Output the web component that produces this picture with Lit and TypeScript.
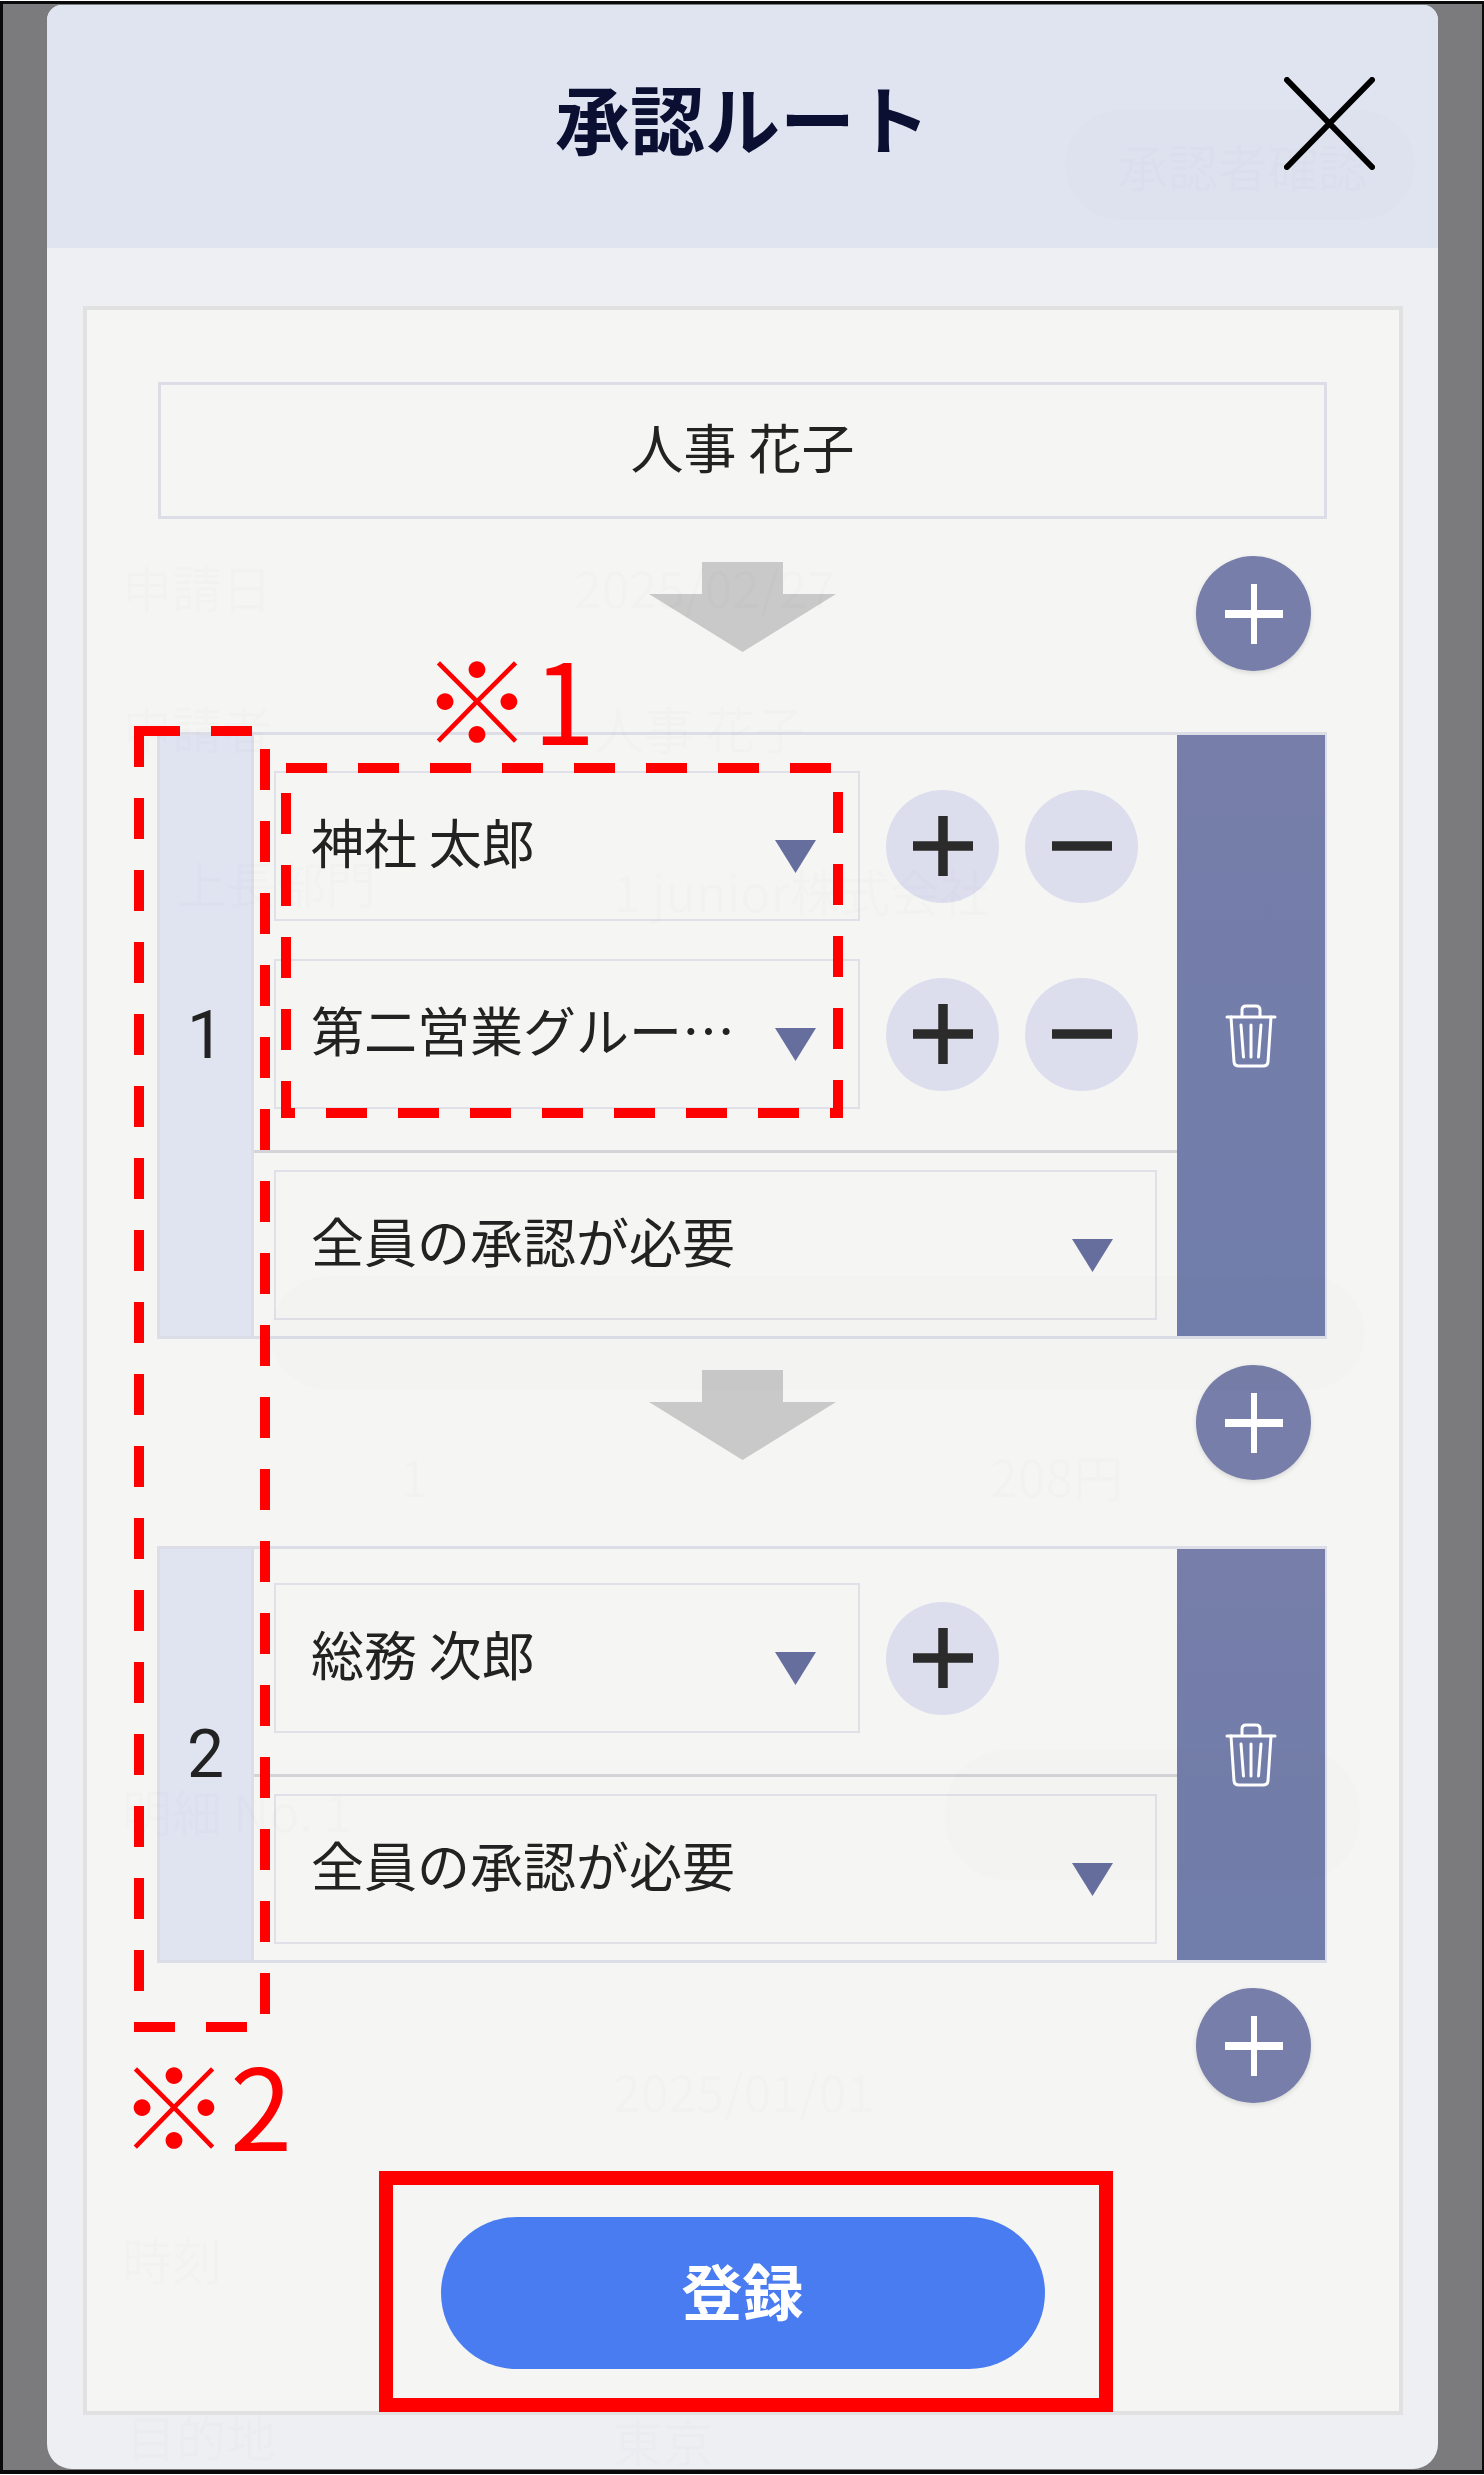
import { LitElement, html, css, svg } from "lit";
import { customElement } from "lit/decorators.js";

const ghosts: [string, number, number, number][] = [
  ["承認者確認", 1118, 135, 50],
  ["神社 太郎", 1160, 300, 46],
  ["申請日", 122, 556, 50],
  ["2025/02/27", 574, 556, 50],
  ["申請者", 122, 697, 50],
  ["人事 花子", 594, 697, 50],
  ["上長部門", 176, 852, 50],
  ["1 junior株式会社", 613, 860, 50],
  ["第二営業部", 580, 1040, 46],
  ["1", 400, 1445, 50],
  ["208円", 990, 1445, 50],
  ["明細 No. 1", 122, 1780, 50],
  ["2025/01/01", 613, 2060, 50],
  ["時刻", 122, 2228, 50],
  ["目的地", 126, 2405, 50],
  ["東京", 613, 2410, 50],
];

const tri = html`<svg class="tri" viewBox="0 0 41 33"><polygon points="0,0 41,0 20.5,33" fill="#666e9e"></polygon></svg>`;

const trash = html`<svg class="trash" viewBox="0 0 52 66" fill="none" stroke="#fff" stroke-width="3" stroke-linecap="round" stroke-linejoin="round">
  <path d="M2 14 H50"></path>
  <path d="M17 13 V7 Q17 3 21 3 H31 Q35 3 35 7 V13"></path>
  <path d="M6 14 L9 59 Q9.5 63 14 63 H38 Q42.5 63 43 59 L46 14"></path>
  <path d="M16 22 L18.5 54 M26 22 V54 M36 22 L33.500 54"></path>
</svg>`;

@customElement("app-root")
export class AppRoot extends LitElement {
  static styles = css`
    :host {
      display: block;
      position: relative;
      width: 1484px;
      height: 2475px;
      background: #fff;
      overflow: hidden;
      font-family: "Noto Sans CJK JP", "Noto Sans", sans-serif;
      color: #222;
    }
    .frame {
      box-sizing: border-box;
      width: 1484px;
      height: 2473px;
      margin-top: 1px;
      padding: 1px 44px 1px 44px;
      border: solid #0a0a0a;
      border-width: 3px 2px 4px 3px;
      background: #7b7b7d;
    }
    .modal {
      height: 100%;
      box-sizing: border-box;
      display: flex;
      flex-direction: column;
      background: #eeeff3;
      border-radius: 15px 15px 25px 25px;
      overflow: hidden;
    }
    .head {
      height: 243px;
      flex: none;
      box-sizing: border-box;
      background: #e0e4f1;
      display: flex;
      align-items: flex-start;
      justify-content: center;
      position: relative;
      padding-top: 60px;
    }
    .title {
      font-size: 75px;
      line-height: 104px;
      font-weight: 700;
      color: #0b1033;
    }
    .close {
      position: absolute;
      left: 1237px;
      top: 72px;
      width: 91px;
      height: 93px;
    }
    .panel {
      flex: 1;
      box-sizing: border-box;
      margin: 58px 35px 54px 36px;
      border: 4px solid #e1e1e1;
      background: #f5f5f3;
      padding: 72px 72px 0 70px;
      display: flex;
      flex-direction: column;
    }
    .name {
      height: 137px;
      margin-left: 1px;
      box-sizing: border-box;
      border: 3px solid #dcdde6;
      display: flex;
      align-items: center;
      justify-content: center;
      font-size: 53px;
      line-height: 1;
      padding-bottom: 8px;
    }
    .conn {
      display: grid;
      grid-template-columns: 1fr 187px 1fr;
      align-items: start;
    }
    .conn.a { height: 213px; }
    .conn.b { height: 207px; }
    .conn.c { height: 254px; }
    .conn.a .arrow { margin-top: 43px; }
    .conn.a .add { margin-top: 37px; }
    .conn.b .arrow { margin-top: 31px; }
    .conn.b .add { margin-top: 26px; }
    .conn.c .add { margin-top: 25px; }
    .arrow { grid-column: 2; width: 187px; height: 90px; display: block; }
    .add {
      grid-column: 3;
      justify-self: end;
      margin-right: 16px;
      width: 115px;
      height: 115px;
      border-radius: 50%;
      background: #767ea9;
      box-shadow: 0 2px 5px rgba(0, 0, 0, 0.12);
      display: flex;
      align-items: center;
      justify-content: center;
    }
    .add svg { width: 60px; height: 60px; display: block; }
    .step {
      display: grid;
      grid-template-columns: 94px 1fr 148px;
      border: 3px solid #dcdde6;
      border-right-width: 2px;
    }
    .num {
      background: #e0e4f1;
      border-right: 3px solid #dcdde6;
      display: flex;
      align-items: center;
      justify-content: center;
      font-family: Roboto, sans-serif;
      font-size: 66px;
      color: #222;
      line-height: 1;
    }
    .body { display: flex; flex-direction: column; min-width: 0; }
    .rows {
      padding: 36px 20px 41px 20px;
      display: flex;
      flex-direction: column;
      gap: 38px;
      border-bottom: 3px solid #d4d4d8;
    }
    .rows.single { padding-top: 34px; }
    .row { display: flex; align-items: center; }
    .sel {
      box-sizing: border-box;
      height: 150px;
      border: 2px solid #e0e1e8;
      display: flex;
      align-items: center;
      justify-content: space-between;
      padding: 0 42px 0 35px;
      font-size: 53px;
      line-height: 1;
      white-space: nowrap;
    }
    .sel span { padding-bottom: 9px; }
    .row .sel { width: 586px; flex: none; }
    .tri { width: 41px; height: 33px; flex: none; margin-top: 20px; display: block; }
    .round {
      width: 113px;
      height: 113px;
      border-radius: 50%;
      background: #dcdeee;
      display: flex;
      align-items: center;
      justify-content: center;
      margin-left: 26px;
      flex: none;
    }
    .round svg { width: 60px; height: 60px; display: block; }
    .foot { padding: 17px 20px 16px 20px; }
    .side {
      background: linear-gradient(#767ea9, #717dab);
      display: flex;
      align-items: center;
      justify-content: center;
    }
    .trash { width: 52px; height: 66px; display: block; }
    .btn {
      align-self: center;
      width: 604px;
      height: 152px;
      margin-left: 1px;
      border-radius: 76px;
      background: #4a7cf1;
      color: #fff;
      font-size: 61px;
      font-weight: 700;
      line-height: 1;
      display: flex;
      align-items: center;
      justify-content: center;
      padding-bottom: 8px;
      box-sizing: border-box;
    }
    .ghost {
      position: absolute;
      white-space: nowrap;
      line-height: 1.2;
      color: rgba(20, 20, 60, 0.011);
      pointer-events: none;
    }
    .ghostpill {
      position: absolute;
      border-radius: 60px;
      background: rgba(20, 20, 60, 0.009);
      pointer-events: none;
    }
    .marks {
      position: absolute;
      left: 0;
      top: 0;
      width: 1484px;
      height: 2475px;
      pointer-events: none;
    }
    .note {
      position: absolute;
      color: #ff0000;
      font-size: 112px;
      line-height: 1;
      white-space: nowrap;
    }
    .n1 { left: 421px; top: 640px; }
    .n2 { left: 118px; top: 2046px; }
  `;

  private plus(color: string) {
    return html`<svg viewBox="0 0 60 60"><path d="M0 30H60" stroke=${color} stroke-width="9.5"></path><path d="M30 0V60" stroke=${color} stroke-width="9.5"></path></svg>`;
  }
  private thinPlus() {
    return html`<svg viewBox="0 0 60 60"><path d="M1 30H59" stroke="#fff" stroke-width="8"></path><path d="M30 0V60" stroke="#fff" stroke-width="6"></path></svg>`;
  }
  private minus() {
    return html`<svg viewBox="0 0 60 60"><path d="M0 30H60" stroke="#2b2b2b" stroke-width="9.5"></path></svg>`;
  }
  private connector(cls: string, arrow: boolean) {
    return html`<div class="conn ${cls}">
      ${arrow
        ? html`<svg class="arrow" viewBox="0 0 187 90"><polygon points="53,0 134,0 134,32 187,32 93.500,90 0,32 53,32" fill="#c9c9c9"></polygon></svg>`
        : html``}
      <div class="add">${this.thinPlus()}</div>
    </div>`;
  }
  private selectRow(label: string, minus: boolean) {
    return html`<div class="row">
      <div class="sel"><span>${label}</span>${tri}</div>
      <div class="round">${this.plus("#2b2b2b")}</div>
      ${minus ? html`<div class="round">${this.minus()}</div>` : html``}
    </div>`;
  }
  private step(n: string, rows: unknown, single = false) {
    return html`<div class="step">
      <div class="num">${n}</div>
      <div class="body">
        <div class="rows ${single ? "single" : ""}">${rows}</div>
        <div class="foot"><div class="sel"><span>全員の承認が必要</span>${tri}</div></div>
      </div>
      <div class="side">${trash}</div>
    </div>`;
  }

  render() {
    return html`
      <div class="frame">
        <div class="modal">
          <div class="head">
            <div class="title">承認ルート</div>
            <svg class="close" viewBox="0 0 91 93" fill="none" stroke="#000" stroke-width="6" stroke-linecap="round"><path d="M3 3L88 90M88 3L3 90"></path></svg>
          </div>
          <div class="panel">
            <div class="name">人事 花子</div>
            ${this.connector("a", true)}
            ${this.step("1", html`${this.selectRow("神社 太郎", true)}${this.selectRow("第二営業グルー…", true)}`)}
            ${this.connector("b", true)}
            ${this.step("2", this.selectRow("総務 次郎", false), true)}
            ${this.connector("c", false)}
            <div class="btn">登録</div>
          </div>
        </div>
      </div>
      <div class="ghostpill" style="left:1065px;top:110px;width:350px;height:110px"></div>
      <div class="ghostpill" style="left:270px;top:1276px;width:1095px;height:114px"></div>
      <div class="ghostpill" style="left:945px;top:1750px;width:415px;height:130px"></div>
      ${ghosts.map(
        ([t, x, y, s]) => html`<div class="ghost" style="left:${x}px;top:${y}px;font-size:${s}px">${t}</div>`
      )}
      <svg class="marks" viewBox="0 0 1484 2475" fill="none" stroke="#ff0000">
        ${svg`<rect x="139" y="731" width="126" height="1296" stroke-width="10" stroke-dasharray="41 31"></rect>
        <rect x="286" y="768" width="552" height="345" stroke-width="10" stroke-dasharray="41 31"></rect>
        <rect x="386" y="2178" width="720" height="227" stroke-width="14"></rect>`}
      </svg>
      <div class="note n1">※1</div>
      <div class="note n2">※2</div>
    `;
  }
}
